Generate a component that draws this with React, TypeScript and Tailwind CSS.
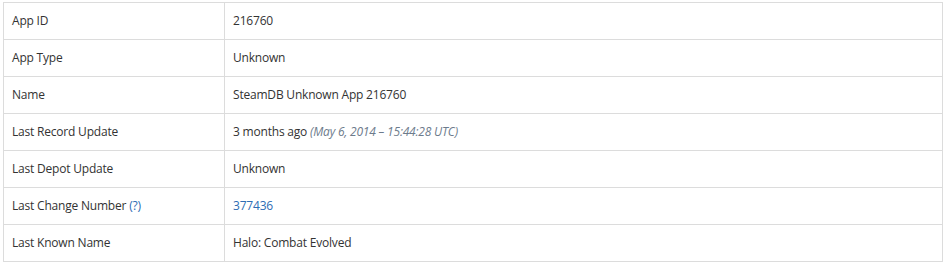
const rows: { label: string; value: React.ReactNode; help?: boolean }[] = [
  { label: 'App ID', value: '216760' },
  { label: 'App Type', value: 'Unknown' },
  { label: 'Name', value: 'SteamDB Unknown App 216760' },
  {
    label: 'Last Record Update',
    value: (
      <>
        3 months ago <i className="text-[#6d7b8c]">(May 6, 2014 – 15:44:28 UTC)</i>
      </>
    ),
  },
  { label: 'Last Depot Update', value: 'Unknown' },
  {
    label: 'Last Change Number',
    help: true,
    value: <a className="text-[#2e6db4]">377436</a>,
  },
  { label: 'Last Known Name', value: 'Halo: Combat Evolved' },
];

const App = () => {
  return (
    <div className="bg-white min-h-screen pt-[2px] pl-[3px] font-['Open_Sans',sans-serif] text-[12px] tracking-[-0.2px] text-[#333]">
      <table className="w-[940px] border-collapse">
        <tbody>
          {rows.map((r) => (
            <tr key={r.label}>
              <td className="w-[221px] border border-[#dcdcdc] px-2 py-2 leading-[20px]">
                {r.label}
                {r.help && <a className="text-[#2e6db4]"> (?)</a>}
              </td>
              <td className="border border-[#dcdcdc] px-2 py-2 leading-[20px]">{r.value}</td>
            </tr>
          ))}
        </tbody>
      </table>
    </div>
  );
};

export default App;
